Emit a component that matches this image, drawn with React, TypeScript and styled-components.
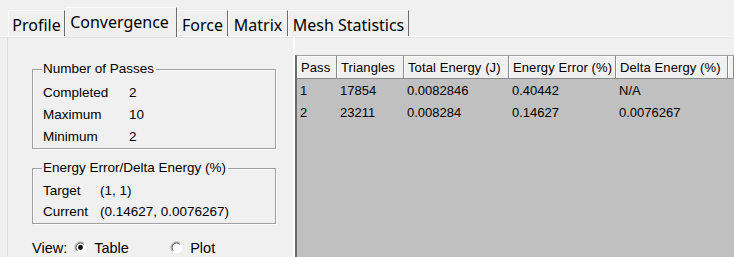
import React from 'react'
import styled, { createGlobalStyle } from 'styled-components'

const GlobalStyle = createGlobalStyle`
  html, body {
    margin: 0;
    padding: 0;
    background: #f0f0f0;
  }
  body {
    width: 734px;
    height: 257px;
    overflow: hidden;
    font-family: 'Liberation Sans', Arial, sans-serif;
    color: #000;
  }
`

const Window = styled.div`
  width: 734px;
  height: 257px;
  display: flex;
  flex-direction: column;
  background: #f0f0f0;
  overflow: hidden;
`

const TabBar = styled.div`
  height: 37px;
  display: flex;
  align-items: flex-end;
  padding-left: 8px;
  box-sizing: border-box;
  border-bottom: 1px solid #fdfdfd;
  box-shadow: 0 1px 0 #e2e2e2;
  flex-shrink: 0;
`

const Tab = styled.div<{ $active?: boolean; $width: number }>`
  width: ${p => p.$width}px;
  height: ${p => (p.$active ? 30 : 26)}px;
  margin-bottom: ${p => (p.$active ? -1 : 0)}px;
  display: flex;
  justify-content: center;
  align-items: flex-start;
  padding-top: ${p => (p.$active ? 5 : 5)}px;
  padding-right: ${p => (p.$active ? 3 : 0)}px;
  box-sizing: border-box;
  border-top: 1px solid #fdfdfd;
  border-left: 1px solid #fdfdfd;
  border-right: 1px solid #6b6b6b;
  background: #f0f0f0;
  font-family: 'Noto Sans', 'Noto Sans CJK SC', sans-serif;
  font-size: 16px;
  line-height: 18px;
  white-space: nowrap;
  position: relative;
  z-index: ${p => (p.$active ? 1 : 0)};
`

const Page = styled.div`
  flex: 1;
  display: flex;
  min-height: 0;
  margin-left: 7px;
  border-left: 1px solid #dcdcdc;
`

const LeftPane = styled.div`
  width: 287px;
  flex-shrink: 0;
  display: flex;
  flex-direction: column;
  padding: 24px 0 0 24px;
  box-sizing: border-box;
  border-right: 2px solid #fdfdfd;
`

const GroupBox = styled.fieldset<{ $gap: number }>`
  width: 244px;
  box-sizing: border-box;
  margin: 0 0 ${p => p.$gap}px 0;
  padding: 4px 0 1px 10px;
  border: 1px solid #a0a0a0;
  box-shadow: 1px 1px 0 #fdfdfd, inset 1px 1px 0 #fdfdfd;
  font-size: 13.5px;
`

const Legend = styled.legend`
  padding: 0 2px 0 1px;
  margin-left: -1px;
  line-height: 16px;
`

const InfoRow = styled.div<{ $labelWidth: number; $height: number }>`
  display: grid;
  grid-template-columns: ${p => p.$labelWidth}px 1fr;
  height: ${p => p.$height}px;
  align-items: center;
  white-space: nowrap;
`

const ViewRow = styled.div`
  display: flex;
  align-items: center;
  height: 20px;
  margin-top: 14px;
  font-size: 14.5px;
`

const ViewLabel = styled.span`
  margin-right: 7px;
`

const RadioOption = styled.label<{ $width: number }>`
  display: flex;
  align-items: center;
  width: ${p => p.$width}px;
  gap: 7px;
`

const GridFrame = styled.div`
  flex: 1;
  margin-top: 18px;
  display: flex;
  flex-direction: column;
  background: #c0c0c0;
  border-left: 2px solid #6b6b6b;
  border-top: 1px solid #a0a0a0;
  font-size: 13px;
  min-width: 0;
`

const GridRow = styled.div`
  display: grid;
  grid-template-columns: 40px 67px 105px 107px 112px 1fr;
`

const HeaderCell = styled.div`
  height: 23px;
  box-sizing: border-box;
  padding-left: 4px;
  display: flex;
  align-items: center;
  background: #f0f0f0;
  border-right: 1px solid #8a8a8a;
  border-bottom: 1px solid #8a8a8a;
  box-shadow: inset 1px 1px 0 #fdfdfd;
  white-space: nowrap;
  overflow: hidden;
  letter-spacing: 0.1px;
`

const DataCell = styled.div<{ $height: number }>`
  height: ${p => p.$height}px;
  padding-left: 3px;
  display: flex;
  align-items: center;
  white-space: nowrap;
`

const Radio: React.FC<{ checked?: boolean }> = ({ checked }) => (
  <svg width="13" height="13" viewBox="0 0 13 13">
    <circle cx="6.5" cy="6.5" r="5.5" fill="#fff" />
    <path d="M 10.4 2.6 A 5.5 5.5 0 0 0 2.6 10.4" fill="none" stroke="#a0a0a0" strokeWidth="1" />
    <path d="M 9.7 3.3 A 4.5 4.5 0 0 0 3.3 9.7" fill="none" stroke="#505050" strokeWidth="1" />
    <path d="M 10.4 2.6 A 5.5 5.5 0 0 1 2.6 10.4" fill="none" stroke="#ffffff" strokeWidth="1" />
    {checked && <circle cx="6.5" cy="6.5" r="2.4" fill="#000" />}
  </svg>
)

const tabs: [string, number][] = [
  ['Profile', 57],
  ['Convergence', 112],
  ['Force', 51],
  ['Matrix', 60],
  ['Mesh Statistics', 121],
]

const passes = [
  ['Completed', '2'],
  ['Maximum', '10'],
  ['Minimum', '2'],
]

const energy = [
  ['Target', '(1, 1)'],
  ['Current', '(0.14627, 0.0076267)'],
]

const headers = ['Pass', 'Triangles', 'Total Energy (J)', 'Energy Error (%)', 'Delta Energy (%)', '']

const rows = [
  ['1', '17854', '0.0082846', '0.40442', 'N/A', ''],
  ['2', '23211', '0.008284', '0.14627', '0.0076267', ''],
]

const App: React.FC = () => (
  <Window>
    <GlobalStyle />
    <TabBar>
      {tabs.map(([t, w]) => (
        <Tab key={t} $width={w} $active={t === 'Convergence'}>{t}</Tab>
      ))}
    </TabBar>
    <Page>
      <LeftPane>
        <GroupBox $gap={11}>
          <Legend>Number of Passes</Legend>
          {passes.map(([k, v]) => (
            <InfoRow key={k} $labelWidth={86} $height={22}>
              <span>{k}</span>
              <span>{v}</span>
            </InfoRow>
          ))}
        </GroupBox>
        <GroupBox $gap={0}>
          <Legend>Energy Error/Delta Energy (%)</Legend>
          {energy.map(([k, v]) => (
            <InfoRow key={k} $labelWidth={57} $height={21}>
              <span>{k}</span>
              <span>{v}</span>
            </InfoRow>
          ))}
        </GroupBox>
        <ViewRow>
          <ViewLabel>View:</ViewLabel>
          <RadioOption $width={96}>
            <Radio checked />
            Table
          </RadioOption>
          <RadioOption $width={60}>
            <Radio />
            Plot
          </RadioOption>
        </ViewRow>
      </LeftPane>
      <GridFrame>
        <GridRow>
          {headers.map((h, i) => (
            <HeaderCell key={i}>{h}</HeaderCell>
          ))}
        </GridRow>
        {rows.map((r, ri) => (
          <GridRow key={ri}>
            {r.map((c, ci) => (
              <DataCell key={ci} $height={ri === 0 ? 22 : 23}>{c}</DataCell>
            ))}
          </GridRow>
        ))}
      </GridFrame>
    </Page>
  </Window>
)

export default App
